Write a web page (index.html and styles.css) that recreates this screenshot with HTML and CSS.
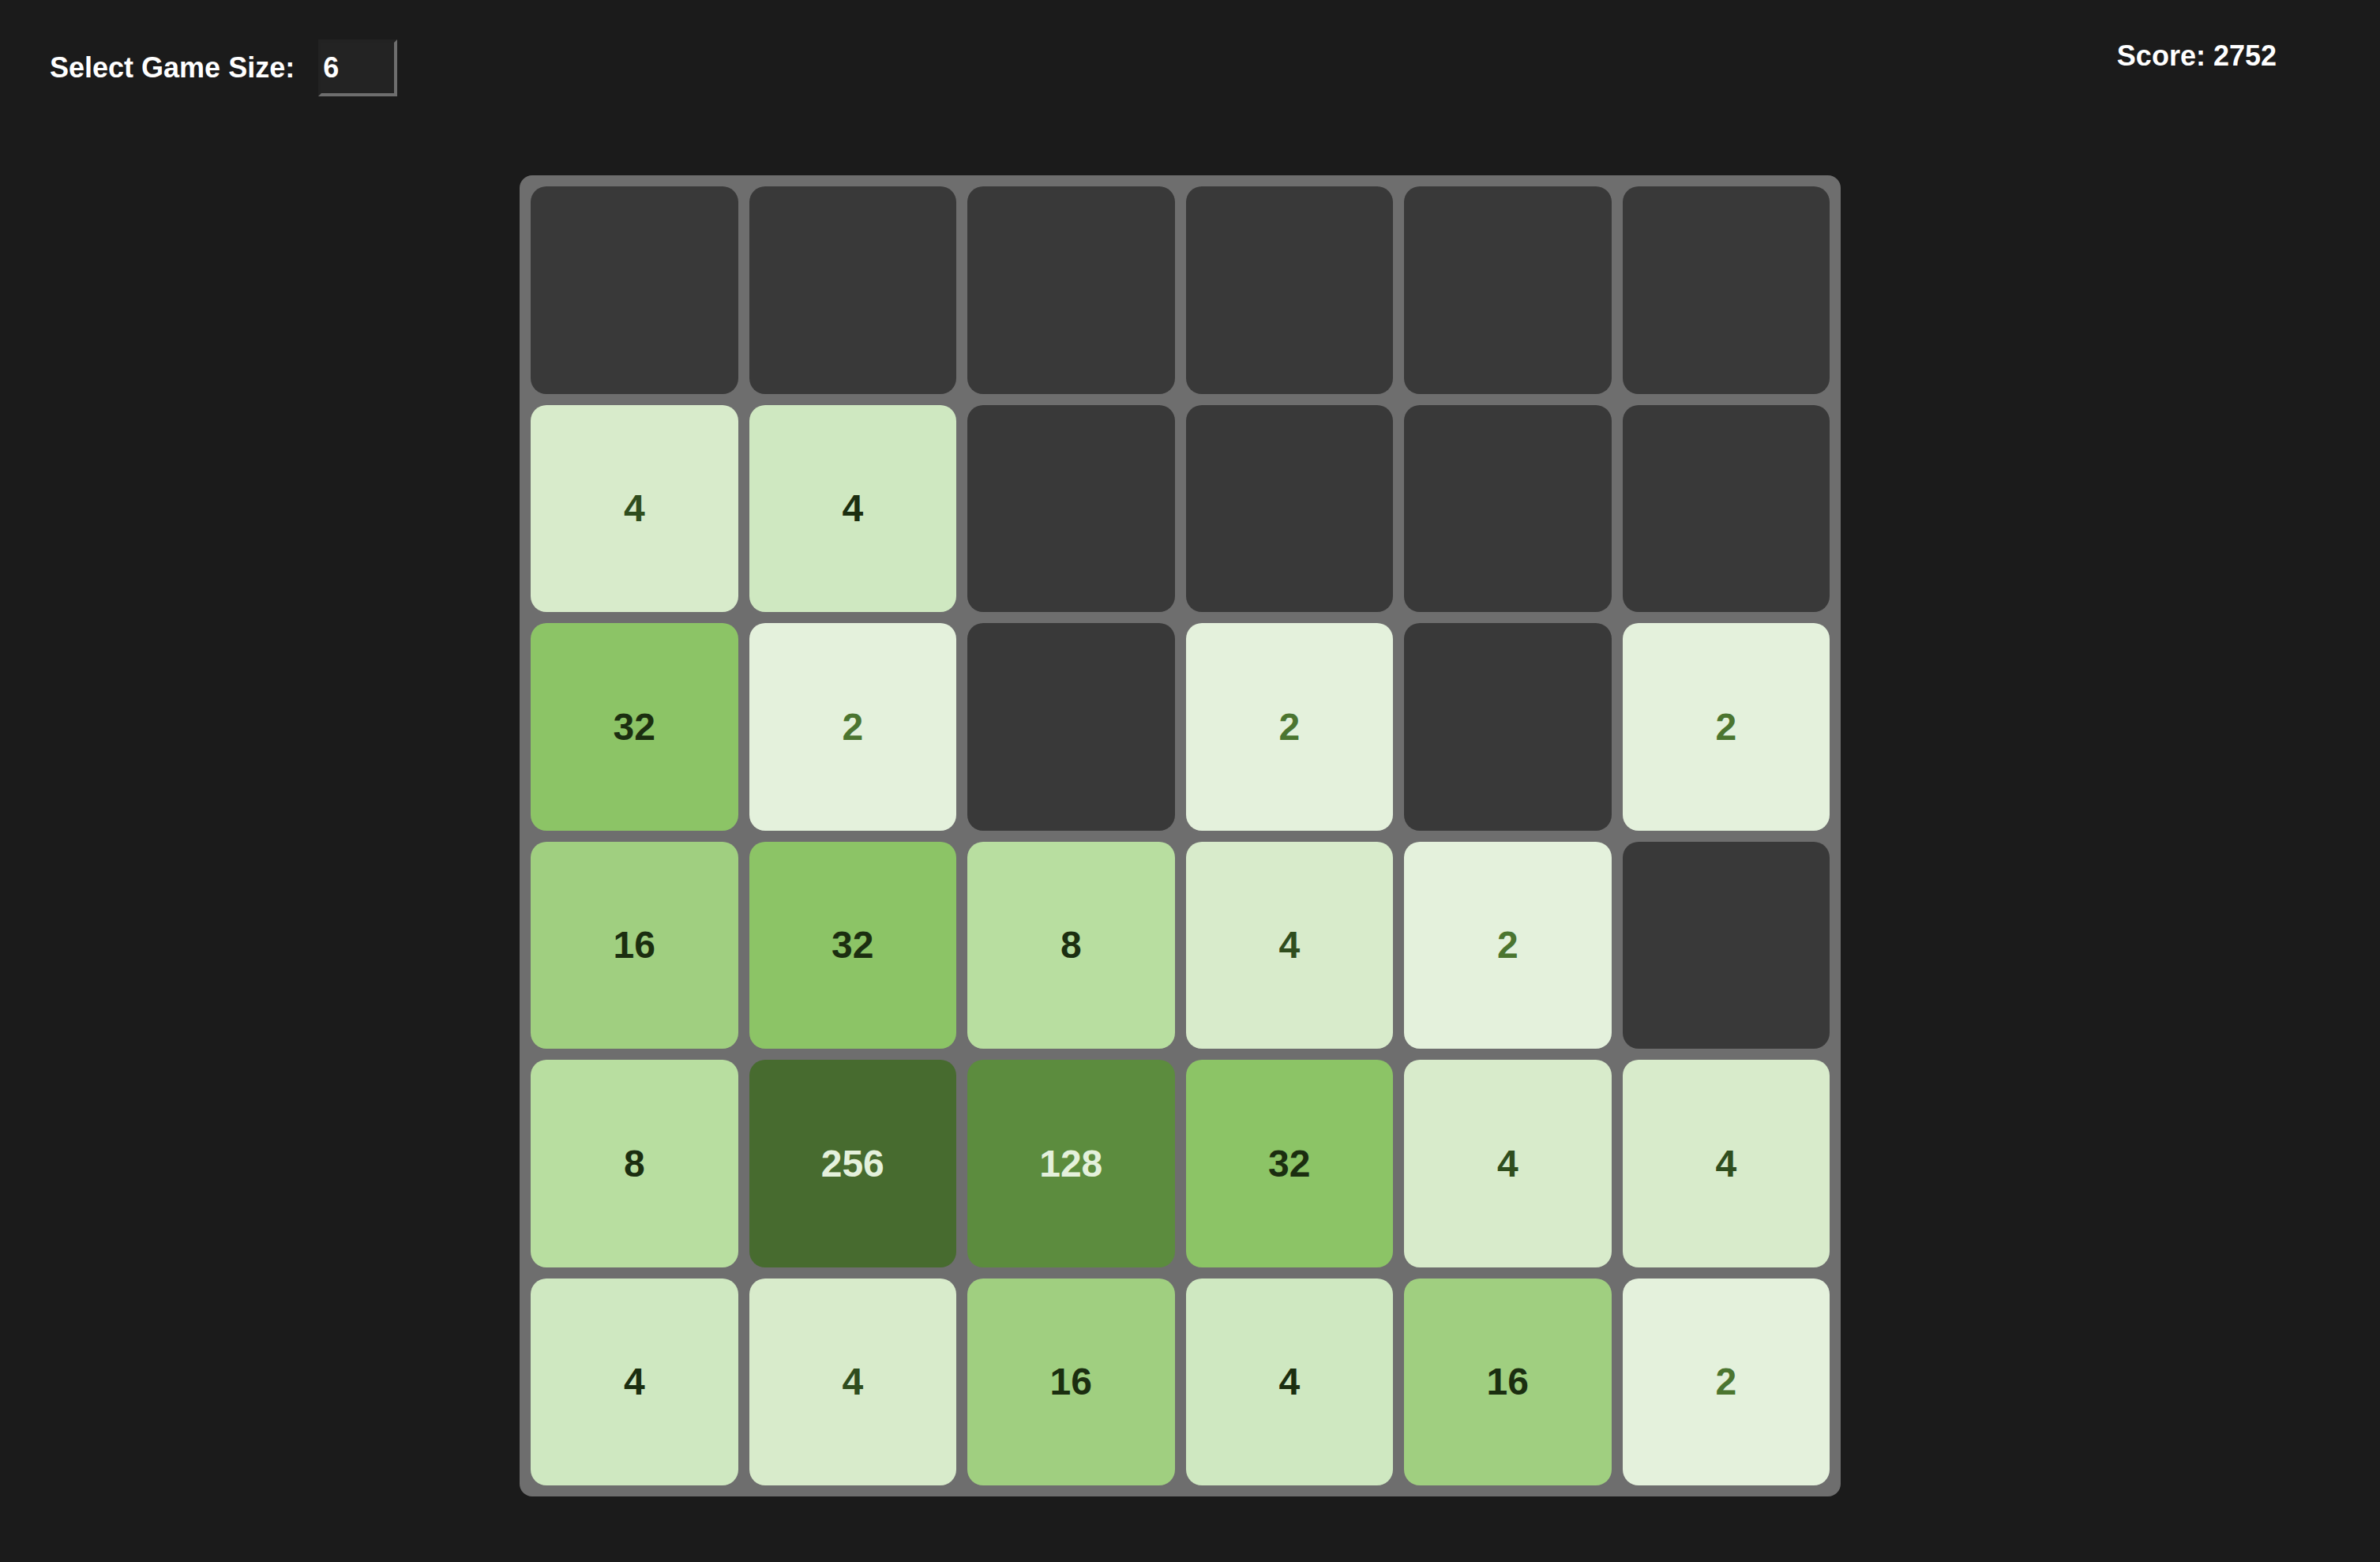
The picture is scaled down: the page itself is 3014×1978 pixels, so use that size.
FILE: index.html
```html
<!DOCTYPE html>
<html>
<head lang="en">
    <meta charset="UTF-8">
    <title>2048</title>
    <link rel="stylesheet" href="styles.css">
</head>
<body>
<div class="top">
    <div class="size-picker">
        <label for="size">Select Game Size:</label>
        <input id="size" type="text" value="6">
    </div>
    <div class="score">Score: 2752</div>
</div>
<div class="board">
    <div class="tile"></div>
    <div class="tile"></div>
    <div class="tile"></div>
    <div class="tile"></div>
    <div class="tile"></div>
    <div class="tile"></div>

    <div class="tile t4">4</div>
    <div class="tile t4b">4</div>
    <div class="tile"></div>
    <div class="tile"></div>
    <div class="tile"></div>
    <div class="tile"></div>

    <div class="tile t32">32</div>
    <div class="tile t2">2</div>
    <div class="tile"></div>
    <div class="tile t2">2</div>
    <div class="tile"></div>
    <div class="tile t2">2</div>

    <div class="tile t16">16</div>
    <div class="tile t32">32</div>
    <div class="tile t8">8</div>
    <div class="tile t4">4</div>
    <div class="tile t2">2</div>
    <div class="tile"></div>

    <div class="tile t8">8</div>
    <div class="tile t256">256</div>
    <div class="tile t128">128</div>
    <div class="tile t32">32</div>
    <div class="tile t4">4</div>
    <div class="tile t4">4</div>

    <div class="tile t4b">4</div>
    <div class="tile t4">4</div>
    <div class="tile t16">16</div>
    <div class="tile t4b">4</div>
    <div class="tile t16">16</div>
    <div class="tile t2">2</div>
</div>
</body>
</html>
```

FILE: styles.css
```css
body {
    margin: 0;
    background: #1b1b1b;
    color: #fff;
    font-family: "Liberation Sans", Arial, sans-serif;
    font-weight: bold;
    font-size: 36px;
}

.top {
    display: flex;
    justify-content: space-between;
    align-items: flex-start;
    padding: 50px 131px 0 63px;
}

.size-picker {
    display: flex;
    align-items: center;
    gap: 30px;
}

.size-picker input {
    box-sizing: border-box;
    width: 100px;
    height: 72px;
    padding: 1px 2px;
    background: #232323;
    color: #fff;
    font-family: inherit;
    font-weight: bold;
    font-size: 36px;
    border: 4px solid;
    border-color: #222 #6e6e6e #6e6e6e #222;
    outline: none;
}

.board {
    display: grid;
    grid-template-columns: repeat(6, 1fr);
    gap: 14px;
    width: 1645px;
    padding: 14px;
    margin: 100px 0 0 658px;
    background: #6e6e6e;
    border-radius: 16px;
}

.tile {
    aspect-ratio: 1;
    display: flex;
    align-items: center;
    justify-content: center;
    background: #393939;
    border-radius: 20px;
    font-size: 48px;
    color: #1b2e10;
}

.t2 {
    background: #e4f1dc;
    color: #4b7530;
}

.t4 {
    background: #d8ebcb;
    color: #2f4d1e;
}

.t4b {
    background: #cfe8c1;
}

.t8 {
    background: #b8dea0;
}

.t16 {
    background: #a0cf80;
}

.t32 {
    background: #8cc466;
}

.t128 {
    background: #5c8c3e;
    color: #e4f1dc;
}

.t256 {
    background: #476b2f;
    color: #e4f1dc;
}
```
